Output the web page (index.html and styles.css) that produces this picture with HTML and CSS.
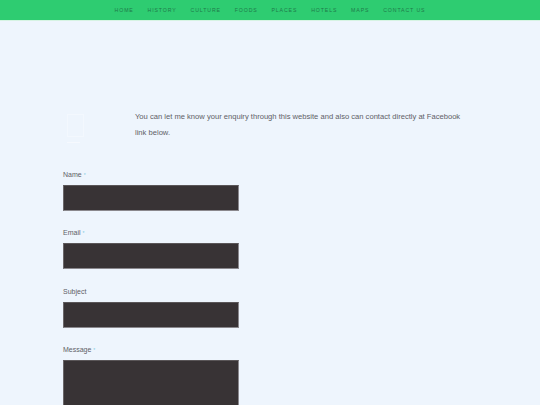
FILE: index.html
```html
<!DOCTYPE html>
<html>
<head>
<meta charset="utf-8">
<link rel="stylesheet" href="styles.css">
</head>
<body>
<nav class="topnav">
  <a href="#">Home</a>
  <a href="#">History</a>
  <a href="#">Culture</a>
  <a href="#">Foods</a>
  <a href="#">Places</a>
  <a href="#">Hotels</a>
  <a href="#">Maps</a>
  <a href="#">Contact Us</a>
</nav>
<main class="content">
  <section class="intro">
    <div class="thumb"><div class="thumb-box"></div><div class="thumb-line"></div></div>
    <p class="intro-text">You can let me know your enquiry through this website and also can contact directly at Facebook link below.</p>
  </section>
  <form class="contact-form">
    <div class="field">
      <label>Name <span class="req">*</span></label>
      <input type="text" class="input">
    </div>
    <div class="field">
      <label>Email <span class="req">*</span></label>
      <input type="text" class="input">
    </div>
    <div class="field">
      <label>Subject</label>
      <input type="text" class="input">
    </div>
    <div class="field">
      <label>Message <span class="req">*</span></label>
      <textarea class="input textarea"></textarea>
    </div>
  </form>
</main>
</body>
</html>
```
FILE: styles.css
```css
html, body {
  margin: 0;
  padding: 0;
}
body {
  background: #eef5fd;
  font-family: "Liberation Sans", Arial, sans-serif;
  color: #555;
  overflow: hidden;
}
.topnav {
  height: 20px;
  background: #2ecc71;
  border-bottom: 1px solid #d6f3e3;
  display: flex;
  justify-content: center;
  align-items: center;
  gap: 13.8px;
}
.topnav a {
  font-size: 5.2px;
  letter-spacing: 0.9px;
  text-transform: uppercase;
  color: #1f7a4a;
  text-decoration: none;
}
.content {
  padding: 88px 0 0 63px;
}
.intro {
  display: flex;
  align-items: flex-start;
}
.thumb {
  width: 72px;
  padding-top: 5px;
}
.thumb-box {
  width: 15px;
  height: 21px;
  margin-left: 4px;
  border: 1px solid #f3f8fe;
}
.thumb-line {
  width: 13px;
  height: 1px;
  margin: 5px 0 0 4px;
  background: #f6f9fe;
}
.intro-text {
  margin: 0;
  width: 332px;
  font-size: 7.6px;
  line-height: 16px;
  color: #606066;
}
.contact-form {
  margin-top: 27px;
  display: flex;
  flex-direction: column;
  gap: 17.4px;
}
.field {
  display: flex;
  flex-direction: column;
}
.field label {
  font-size: 7px;
  line-height: 10px;
  color: #606066;
  margin-bottom: 5px;
}
.req {
  color: #7ccbe0;
  font-size: 5px;
}
.input {
  box-sizing: border-box;
  width: 176px;
  height: 26px;
  margin: 0;
  background: #383335;
  border: 1px solid #8a888d;
  border-top-color: #5a5658;
  border-left-color: #6a6669;
  padding: 0;
  display: block;
}
.textarea {
  height: 80px;
  resize: none;
}
```
